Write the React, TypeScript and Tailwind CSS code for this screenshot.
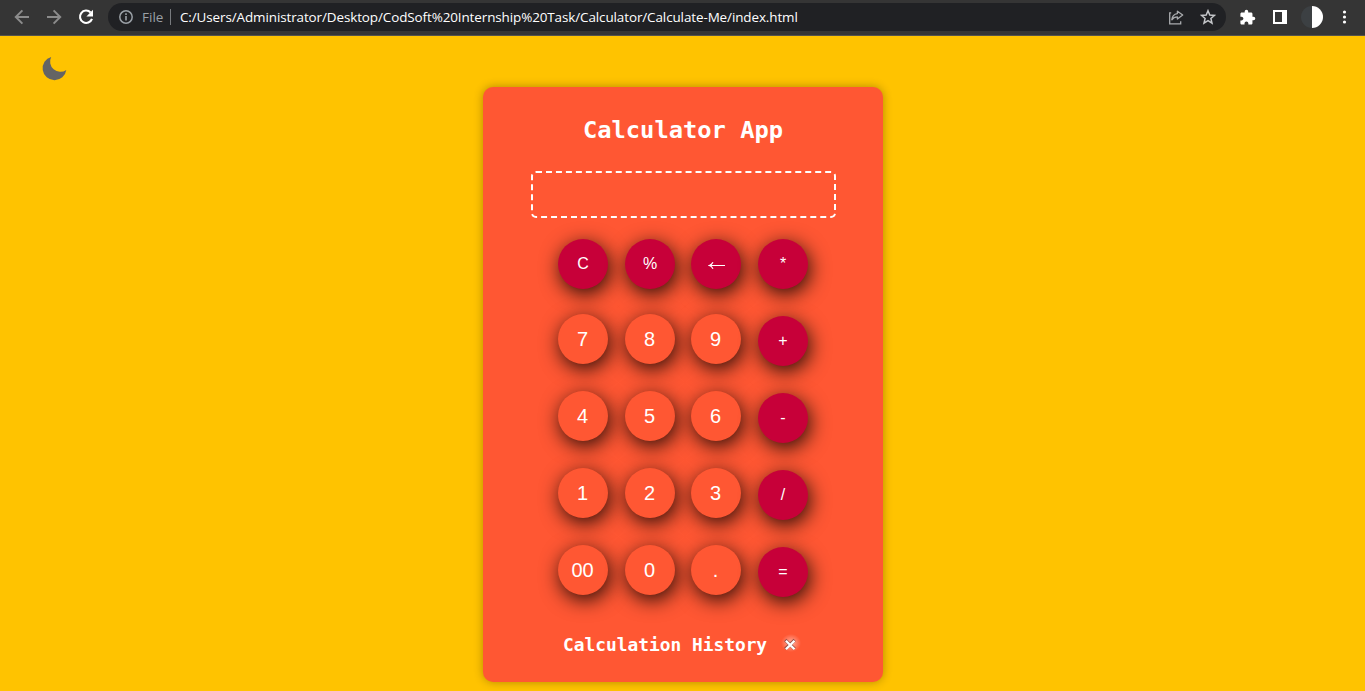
import React from 'react';

type Key = { label: string; kind: 'op' | 'num'; low?: boolean };

const op = (label: string, low = false): Key => ({ label, kind: 'op', low });
const num = (label: string): Key => ({ label, kind: 'num' });

const rows: Key[][] = [
  [op('C'), op('%'), op('←'), op('*')],
  [num('7'), num('8'), num('9'), op('+', true)],
  [num('4'), num('5'), num('6'), op('-', true)],
  [num('1'), num('2'), num('3'), op('/', true)],
  [num('00'), num('0'), num('.'), op('=', true)],
];

function ArrowIcon({ flip = false }: { flip?: boolean }) {
  return (
    <svg width="16" height="16" viewBox="0 0 16 16" fill="none" stroke="#8b8b8b" strokeWidth="2" className={flip ? 'rotate-180' : ''}>
      <path d="M15 8H2.2M8.4 1.4L1.8 8l6.6 6.6" />
    </svg>
  );
}

function BrowserBar() {
  return (
    <header className="flex h-9 items-start border-b border-[#55534c] bg-[#353535] pt-[3px]">
      <div className="flex h-7 w-[108px] shrink-0 items-center pl-3.5">
        <ArrowIcon />
        <span className="ml-4 flex"><ArrowIcon flip /></span>
        <svg className="ml-4" width="16" height="16" viewBox="0 0 16 16" fill="none">
          <path d="M12.6 3.4A6.2 6.2 0 1 0 14 9.9" stroke="#fff" strokeWidth="2.1" />
          <path d="M15 .8v6.6H8.4z" fill="#fff" />
        </svg>
      </div>
      <div className="flex h-7 w-[1118px] shrink-0 items-center rounded-full bg-[#202124] pl-[11px] font-['Open_Sans',sans-serif]">
        <svg width="14" height="14" viewBox="0 0 14 14" fill="none">
          <circle cx="7" cy="7" r="6.2" stroke="#9aa0a6" strokeWidth="1.5" />
          <path d="M7 6v4.5M7 3.3v1.6" stroke="#9aa0a6" strokeWidth="1.6" />
        </svg>
        <span className="ml-[9px] w-7 text-[13.5px] leading-7 text-[#9aa0a6]">File</span>
        <span className="h-4 w-px bg-[#777a7e]" />
        <span className="ml-[9px] whitespace-nowrap text-[13.45px] leading-7 tracking-[-0.1px] text-white">
          C:/Users/Administrator/Desktop/CodSoft%20Internship%20Task/Calculator/Calculate-Me/index.html
        </span>
        <span className="mr-[10px] ml-auto flex items-center gap-4">
          <svg width="16" height="16" viewBox="0 0 16 16" fill="none" stroke="#a9abae" strokeWidth="1.3">
            <path d="M3.2 3.8H1.700v11h11v-2.500" />
            <path d="M9.400 2.200l5.300 3.900-5.300 3.900V7.900c-2.600 0-4.300.8-5.600 2.900.3-3.700 2.300-5.700 5.600-6.200z" strokeLinejoin="round" />
          </svg>
          <svg width="16" height="16" viewBox="0 0 16 16" fill="none" stroke="#c4c6c9" strokeWidth="1.5">
            <path d="M8 1.700l1.800 4.300 4.700.4-3.600 3.100 1.100 4.600L8 11.700 4 14.100l1.100-4.600L1.500 6.400l4.700-.4z" />
          </svg>
        </span>
      </div>
      <div className="flex h-7 items-center pl-[13px]">
        <svg width="17" height="17" viewBox="0 0 24 24" fill="#fff">
          <path d="M20.500 11H19V7c0-1.100-.9-2-2-2h-4V3.500a2.500 2.500 0 0 0-5 0V5H4c-1.100 0-2 .9-2 2v3.800h1.500c1.500 0 2.700 1.200 2.700 2.700S5 16.200 3.500 16.200H2V20c0 1.100.9 2 2 2h3.800v-1.500c0-1.500 1.200-2.700 2.700-2.700s2.700 1.200 2.700 2.700V22H17c1.100 0 2-.9 2-2v-4h1.500a2.500 2.500 0 0 0 0-5z" />
        </svg>
        <svg className="ml-[17px]" width="14" height="14" viewBox="0 0 14 14">
          <path fill="#fff" fillRule="evenodd" d="M0 0h14v14H0zM2 2v10h7V2z" />
        </svg>
        <svg className="ml-[14px]" width="22" height="22" viewBox="0 0 22 22">
          <circle cx="11" cy="11" r="11" fill="#3c4043" />
          <path d="M11 0a11 11 0 0 1 0 22z" fill="#fff" />
        </svg>
        <svg className="ml-[19px]" width="5" height="14" viewBox="0 0 5 14" fill="#fff">
          <circle cx="2.500" cy="2" r="1.600" /><circle cx="2.500" cy="7" r="1.600" /><circle cx="2.500" cy="12" r="1.600" />
        </svg>
      </div>
    </header>
  );
}

function CalcKey({ item }: { item: Key }) {
  const base = 'flex size-[50px] items-center justify-center rounded-full text-white shadow-[2px_5px_20px_rgba(0,0,0,0.85)] ';
  const tone = item.kind === 'op' ? 'bg-[#c70039] text-[16px]' : 'bg-[#ff5733] pr-px text-[20px]';
  return (
    <button className={base + tone + (item.low ? ' mt-0.5' : '')}>
      {item.label === '←' ? (
        <svg aria-label="Backspace" className="mt-px ml-px" width="18" height="8" viewBox="0 0 18 8" fill="none" stroke="#fff">
          <path d="M1.500 4.500H17" />
          <path d="M5 1.300C4 3.200 3 4 1.300 4.500 3 5 4 5.800 5 7.700" strokeWidth="1.200" />
        </svg>
      ) : item.label}
    </button>
  );
}

export default function App() {
  return (
    <div className="flex h-[691px] w-[1365px] flex-col overflow-hidden bg-[#ffc300]">
      <BrowserBar />
      <main className="flex grow items-start">
        <div className="w-[483px] shrink-0 pt-5 pl-[41px]">
          <svg width="26" height="26" viewBox="0 0 26 26" fill="#646464">
            <path d="M10.200.9A11.900 11.900 0 1 0 25.300 14 10.300 10.300 0 0 1 10.200.9z" />
          </svg>
        </div>
        <section className="mt-[51px] flex h-[595px] w-[400px] flex-col items-center rounded-[10px] bg-[#ff5733] shadow-[0_0_10px_rgba(0,0,0,0.3)]">
          <h1 className="mt-7 font-['DejaVu_Sans_Mono',monospace] text-[23.750px] leading-[30px] font-bold text-white">Calculator App</h1>
          <div className="mt-[26px] h-[47px] w-[305px] rounded-[5px] border-2 border-dashed border-white" />
          <div className="mt-[21px] grid grid-cols-[67px_66px_67px_50px] grid-rows-[75px_77px_77px_77px_52px] font-['Liberation_Sans',sans-serif]">
            {rows.flat().map((k) => <CalcKey key={k.label} item={k} />)}
          </div>
          <div className="mt-9 flex w-full items-center pl-20">
            <h2 className="font-['DejaVu_Sans_Mono',monospace] text-[17.850px] leading-6 font-bold text-white">Calculation History</h2>
            <svg className="ml-[11px] overflow-visible" width="24" height="16" viewBox="0 0 24 16">
              <defs>
                <radialGradient id="glow"><stop offset="0" stopColor="#fff" stopOpacity=".55" /><stop offset="1" stopColor="#fff" stopOpacity="0" /></radialGradient>
              </defs>
              <rect x="3" y="-3" width="20" height="18" fill="url(#glow)" />
              <path d="M7.200 3l9.500 9M16.700 3l-9.500 9" stroke="#9a5148" strokeWidth="3.200" />
              <path d="M7.900 3.700l8.600 8.600M16.500 3.700l-8.600 8.600" stroke="#fff" strokeWidth="2.300" />
            </svg>
          </div>
        </section>
      </main>
    </div>
  );
}
